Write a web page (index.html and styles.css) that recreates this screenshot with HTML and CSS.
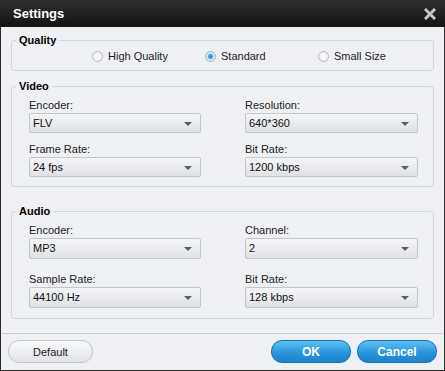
FILE: index.html
```html
<!DOCTYPE html>
<html lang="en">
<head>
  <meta charset="UTF-8" />
  <title>Settings</title>
  <link rel="stylesheet" href="styles.css">
</head>
<body>

<div class="window">
  <div class="titlebar">
    <span class="title">Settings</span>
    <svg class="close" width="12" height="12" viewBox="0 0 12 12">
      <path d="M2 2 L10 10 M10 2 L2 10" stroke="#c4c4c4" stroke-width="3" stroke-linecap="square" />
    </svg>
  </div>

  <div class="content">
    <fieldset class="group quality">
      <legend>Quality</legend>
      <div class="radios">
        <label class="radio"><span class="dot"></span>High Quality</label>
        <label class="radio checked"><span class="dot"></span>Standard</label>
        <label class="radio"><span class="dot"></span>Small Size</label>
      </div>
    </fieldset>

    <fieldset class="group video">
      <legend>Video</legend>
      <div class="fields">
        <div class="field">
          <div class="label">Encoder:</div>
          <div class="select">FLV<span class="arrow"></span></div>
        </div>
        <div class="field">
          <div class="label">Resolution:</div>
          <div class="select">640*360<span class="arrow"></span></div>
        </div>
        <div class="field">
          <div class="label">Frame Rate:</div>
          <div class="select">24 fps<span class="arrow"></span></div>
        </div>
        <div class="field">
          <div class="label">Bit Rate:</div>
          <div class="select">1200 kbps<span class="arrow"></span></div>
        </div>
      </div>
    </fieldset>

    <fieldset class="group audio">
      <legend>Audio</legend>
      <div class="fields">
        <div class="field">
          <div class="label">Encoder:</div>
          <div class="select">MP3<span class="arrow"></span></div>
        </div>
        <div class="field">
          <div class="label">Channel:</div>
          <div class="select">2<span class="arrow"></span></div>
        </div>
        <div class="field">
          <div class="label">Sample Rate:</div>
          <div class="select">44100 Hz<span class="arrow"></span></div>
        </div>
        <div class="field">
          <div class="label">Bit Rate:</div>
          <div class="select">128 kbps<span class="arrow"></span></div>
        </div>
      </div>
    </fieldset>
  </div>

  <div class="footer">
    <button class="btn default">Default</button>
    <div class="actions">
      <button class="btn primary">OK</button>
      <button class="btn primary">Cancel</button>
    </div>
  </div>
</div>

</body>
</html>
```

FILE: styles.css
```css
* {
  margin: 0;
  padding: 0;
  box-sizing: border-box;
  font-family: 'Liberation Sans', Arial, sans-serif;
}

html, body {
  width: 445px;
  height: 371px;
  background: #1c1c1c;
  overflow: hidden;
}

.window {
  width: 445px;
  height: 371px;
  display: flex;
  flex-direction: column;
  background: #eef0f3;
  border: 1px solid #2a2a2a;
  border-top: none;
}

.titlebar {
  height: 27px;
  margin: 0 -1px;
  padding: 0 9px 0 13px;
  display: flex;
  align-items: center;
  justify-content: space-between;
  background: linear-gradient(to bottom, #2e2e2e, #141414);
}

.title {
  color: #fff;
  font-size: 13px;
  font-weight: bold;
}

.content {
  flex: 1;
  padding: 6px 10px 0 10px;
}

.group {
  border: 1px solid #d3d7dc;
  border-radius: 3px;
  padding: 0;
}

.group legend {
  font-size: 11px;
  font-weight: bold;
  line-height: 14px;
  color: #000;
  margin-left: 4px;
  padding: 0 3px;
}

.radios {
  display: grid;
  grid-template-columns: 113px 113px 113px;
  padding: 2px 0 7px 80px;
}

.radio {
  display: flex;
  align-items: center;
  gap: 5px;
  font-size: 11px;
  line-height: 14px;
  color: #222;
}

.dot {
  width: 11px;
  height: 11px;
  border-radius: 50%;
  border: 1px solid #b7bbc0;
  background: radial-gradient(circle, #f6f7f8 40%, #e2e4e7 100%);
}

.radio.checked .dot {
  border-color: #9ab4cc;
  background: radial-gradient(circle, #2b8fd8 0, #4aa6e6 2px, #cfe3f3 3.2px, #f1f5f9 100%);
}

.video {
  margin-top: 8px;
}

.audio {
  margin-top: 17px;
}

.fields {
  display: grid;
  grid-template-columns: 172px 173px;
  column-gap: 44px;
  row-gap: 10px;
  padding: 6px 0 9px 17px;
}

.audio .fields {
  row-gap: 14px;
  padding-bottom: 10px;
}

.audio .select {
  height: 21px;
  line-height: 19px;
}

.label {
  font-size: 11px;
  line-height: 13px;
  color: #222;
  margin-bottom: 1px;
}

.select {
  position: relative;
  height: 20px;
  padding-left: 3px;
  font-size: 11px;
  line-height: 18px;
  color: #111;
  border: 1px solid #c3c7cc;
  border-radius: 2px;
  background: linear-gradient(to bottom, #f4f5f6, #dfe1e5);
}

.arrow {
  position: absolute;
  right: 8px;
  top: 8px;
  width: 0;
  height: 0;
  border-left: 4px solid transparent;
  border-right: 4px solid transparent;
  border-top: 4px solid #5a5e63;
}

.footer {
  margin: 0 1px;
  border-top: 1px solid #c9ccd0;
  padding: 6px 6px 7px 6px;
  display: flex;
  justify-content: space-between;
}

.actions {
  display: flex;
  gap: 6px;
}

.btn {
  width: 80px;
  height: 23px;
  border-radius: 11px;
  font-size: 11px;
  cursor: pointer;
}

.btn.default {
  width: 85px;
  color: #222;
  border: 1px solid #c2c5ca;
  background: linear-gradient(to bottom, #f7f8f9, #e1e3e6);
}

.btn.primary {
  color: #fff;
  font-weight: bold;
  font-size: 12px;
  border: 1px solid #1670b3;
  background: linear-gradient(to bottom, #5cc0f0, #2a95dc 55%, #1b82cc);
}
```
